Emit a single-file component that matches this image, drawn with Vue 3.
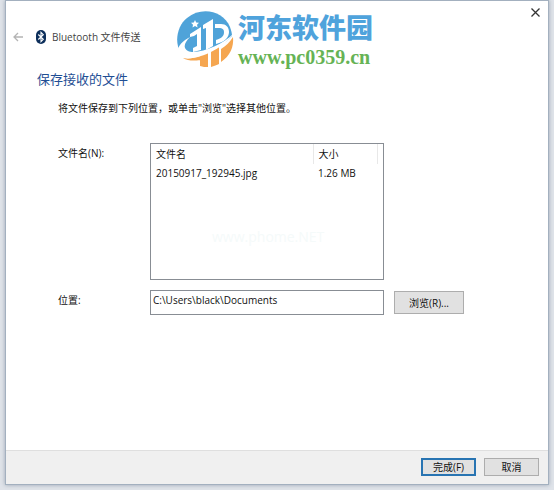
<script setup>
import { ref } from 'vue'

const files = [{ name: '20150917_192945.jpg', size: '1.26 MB' }]
const location = ref('C:\\Users\\black\\Documents')
</script>

<template>
  <div class="desktop">
    <main class="dialog">
      <header class="titlebar">
        <button class="icon-btn back" type="button" aria-label="Back">
          <svg width="10" height="10" viewBox="0 0 10 10" fill="none" stroke="#b4b4b4" stroke-width="1.3">
            <path d="M10 5H1M5 1L1 5l4 4" />
          </svg>
        </button>
        <svg class="bt" width="10" height="14" viewBox="0 0 10 14">
          <rect width="10" height="14" rx="5" fill="#0d2f5b" />
          <path d="M2.3 4.5l5 4.800L5 11.600V2.400l2.300 2.300-5 4.800" fill="none" stroke="#fff" stroke-width="1.1" />
        </svg>
        <span class="caption">Bluetooth 文件传送</span>
        <button class="icon-btn close" type="button" aria-label="Close">
          <svg width="9" height="9" viewBox="0 0 9 9" stroke="#333" stroke-width="1.3">
            <path d="M.5.5l8 8M8.5.5l-8 8" />
          </svg>
        </button>
      </header>

      <div class="brand">
        <svg class="logo" width="58" height="58" viewBox="0 0 58 58">
          <path d="M5 44C-2 32 1 16 11 8 26-4 47 1 54 17c1 3 2 6 2 9-7 8-17 13-31 17-9 2-16 3-20 1z" fill="#4fa3d9" />
          <path d="M57 27c1 10-3 19-12 25V39c5-3 9-7 12-12zM7 48c6 1 11 0 17-2v4c-6 1-12 1-17-2zM24 45l8-3v15c-3 0-5 0-8-1zM35 41l8-4v17c-2 1-5 2-8 3z" fill="#f5a650" />
          <path d="M14 24l11-7v23l-8 2v-4l4-2V24l-3 2-4 1z" fill="#fff" />
          <path d="M27 15l10-6v27l-7 4V18l-3 1z" fill="#fff" />
          <path d="M39 14h6c5 0 8 3 8 8s-4 10-13 12v-4c6-2 8-4 8-8 0-3-2-4-5-4h-4z" fill="#fff" />
          <path d="M14 27C4 32-3 42 5 47c12 6 43-8 53-24C46 36 21 45 12 41c-6-3-3-9 2-14z" fill="#fff" />
          <path d="M19 10l1.200 2.500 2.800.3-2 1.900.6 2.800-2.600-1.400-2.500 1.400.5-2.800-2-1.900 2.800-.3z" fill="#fff" />
        </svg>
        <div class="brand-text">
          <span class="brand-name">河东软件园</span>
          <span class="brand-url">www.pc0359.cn</span>
        </div>
      </div>

      <section class="content">
        <h1>保存接收的文件</h1>
        <p class="hint">将文件保存到下列位置，或单击"浏览"选择其他位置。</p>
        <form id="save-form" class="form" @submit.prevent>
          <span id="files-label" class="label">文件名(N):</span>
          <div class="list">
            <table aria-labelledby="files-label">
              <thead>
                <tr><th class="name">文件名</th><th>大小</th></tr>
              </thead>
              <tbody>
                <tr v-for="file in files" :key="file.name">
                  <td>{{ file.name }}</td><td>{{ file.size }}</td>
                </tr>
              </tbody>
            </table>
            <span class="ghost">www.phome.NET</span>
          </div>
          <label class="label path-label" for="location">位置:</label>
          <input id="location" v-model="location" class="path" type="text" />
          <button class="btn browse" type="button">浏览(R)...</button>
        </form>
      </section>

      <footer class="footer">
        <button class="btn primary" type="submit" form="save-form">完成(F)</button>
        <button class="btn" type="button">取消</button>
      </footer>
    </main>
  </div>
</template>

<style>
body {
  margin: 0;
}
</style>

<style scoped>
* {
  box-sizing: border-box;
}
.desktop {
  min-height: 100vh;
  display: flex;
  padding: 0 5px 5px;
  background: #dfe3e9;
  font: 10px/14px "Open Sans", "Noto Sans CJK SC", sans-serif;
  color: #111;
}
.dialog {
  position: relative;
  flex: 1;
  display: flex;
  flex-direction: column;
  background: #fff;
  border: 1px solid #a3b0bf;
  box-shadow: 0 0 4px #9aa5b2;
}
.titlebar {
  display: flex;
  align-items: center;
  height: 72px;
  padding: 0 8px 0 7px;
}
.icon-btn {
  display: flex;
  padding: 0;
  border: 0;
  background: none;
}
.bt {
  margin-left: 13px;
}
.caption {
  margin-left: 6px;
  color: #444;
}
.close {
  align-self: flex-start;
  margin: 7px 0 0 auto;
}
.brand {
  position: absolute;
  top: 9px;
  left: 170px;
  display: flex;
  gap: 4px;
}
.brand-text {
  display: flex;
  flex-direction: column;
}
.brand-name {
  font: 900 27px/34px "Noto Sans CJK SC", sans-serif;
  color: #4fa3dc;
}
.brand-url {
  font: bold 20px/26px "Liberation Serif", serif;
  color: #66b355;
}
.content {
  flex: 1;
  padding: 0 84px 0 31px;
}
h1 {
  margin: 0;
  font-size: 13px;
  line-height: 12px;
  font-weight: 400;
  color: #1f4e94;
}
.hint {
  margin: 16px 0 0 21px;
}
.form {
  display: grid;
  grid-template-columns: 82px 1fr 70px;
  column-gap: 10px;
  row-gap: 10px;
  margin: 28px 0 0 21px;
}
.label {
  padding-top: 3px;
}
.list {
  position: relative;
  height: 137px;
  border: 1px solid #888d94;
}
table {
  width: 227px;
  table-layout: fixed;
  border-collapse: collapse;
}
th,
td {
  height: 18px;
  padding: 0 5px;
  text-align: left;
  font-weight: 400;
}
th {
  height: 20px;
  border-right: 1px solid #e8e8e8;
}
.name {
  width: 162px;
}
.ghost {
  position: absolute;
  top: 86px;
  left: 61px;
  font-size: 14px;
  color: #f5fafa;
}
.path-label {
  grid-column: 1;
}
.path {
  width: 100%;
  min-width: 0;
  height: 25px;
  padding: 0 2px 5px;
  border: 1px solid #888d94;
  border-radius: 0;
  background: #fff;
  font: inherit;
  color: inherit;
}
.btn {
  min-width: 55px;
  height: 18px;
  padding: 0;
  border: 1px solid #adadad;
  background: #e1e1e1;
  font: inherit;
  color: inherit;
}
.browse {
  height: 23px;
  align-self: center;
}
.primary {
  border: 2px solid #2874b2;
}
.footer {
  display: flex;
  justify-content: flex-end;
  gap: 8px;
  padding: 7px 9px 8px;
  border-top: 1px solid #dfdfdf;
  background: #f0f0f0;
}
</style>
